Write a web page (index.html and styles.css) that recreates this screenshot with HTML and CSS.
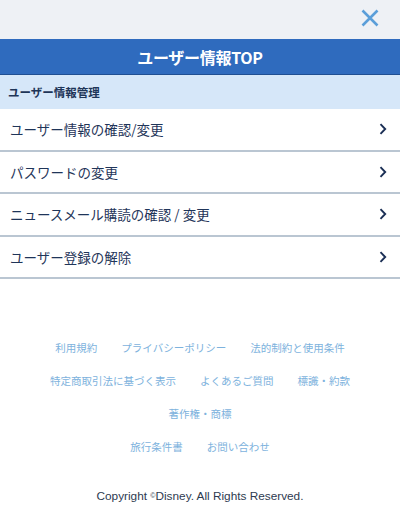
FILE: index.html
```html
<!DOCTYPE html>
<html lang="ja">
<head>
<meta charset="utf-8">
<title>ユーザー情報TOP</title>
<link rel="stylesheet" href="styles.css">
</head>
<body>
<div class="topbar">
  <svg class="close" width="18" height="18" viewBox="0 0 18 18"><path d="M1.5 1.5 L16.5 16.5 M16.5 1.5 L1.5 16.5" stroke="#5b9fd9" stroke-width="2.6" fill="none"/></svg>
</div>
<h1 class="title">ユーザー情報TOP</h1>
<div class="subhead">ユーザー情報管理</div>
<ul class="menu">
  <li class="row"><span>ユーザー情報の確認/変更</span><svg class="chev" width="8" height="12" viewBox="0 0 8 12"><path d="M1.5 1.2 L6.2 6 L1.5 10.8" stroke="#1b2f55" stroke-width="1.9" fill="none"/></svg></li>
  <li class="row"><span>パスワードの変更</span><svg class="chev" width="8" height="12" viewBox="0 0 8 12"><path d="M1.5 1.2 L6.2 6 L1.5 10.8" stroke="#1b2f55" stroke-width="1.9" fill="none"/></svg></li>
  <li class="row"><span>ニュースメール購読の確認 / 変更</span><svg class="chev" width="8" height="12" viewBox="0 0 8 12"><path d="M1.5 1.2 L6.2 6 L1.5 10.8" stroke="#1b2f55" stroke-width="1.9" fill="none"/></svg></li>
  <li class="row"><span>ユーザー登録の解除</span><svg class="chev" width="8" height="12" viewBox="0 0 8 12"><path d="M1.5 1.2 L6.2 6 L1.5 10.8" stroke="#1b2f55" stroke-width="1.9" fill="none"/></svg></li>
</ul>
<footer class="footer">
  <div class="links">
    <a>利用規約</a><a>プライバシーポリシー</a><a>法的制約と使用条件</a>
  </div>
  <div class="links">
    <a>特定商取引法に基づく表示</a><a>よくあるご質問</a><a>標識・約款</a>
  </div>
  <div class="links">
    <a>著作権・商標</a>
  </div>
  <div class="links">
    <a>旅行条件書</a><a>お問い合わせ</a>
  </div>
  <p class="copy">Copyright <span class="c">©</span>Disney. All Rights Reserved.</p>
</footer>
</body>
</html>
```
FILE: styles.css
```css
* { box-sizing: border-box; }
body {
  margin: 0;
  width: 400px;
  background: #fff;
  font-family: "Noto Sans CJK JP", "Noto Sans", sans-serif;
  color: #1f3559;
}
.topbar {
  height: 39px;
  background: #eef1f5;
  display: flex;
  justify-content: flex-end;
  align-items: center;
  padding-right: 21px;
  padding-bottom: 4px;
}
.close { display: block; }
.title {
  margin: 0;
  height: 36px;
  background: #2f6bbe;
  border-bottom: 1px solid #1f4f92;
  color: #fff;
  font-size: 16px;
  font-weight: 700;
  display: flex;
  align-items: center;
  justify-content: center;
  letter-spacing: -0.3px;
}
.subhead {
  height: 34px;
  background: #d6e7f9;
  font-size: 11.5px;
  font-weight: 700;
  color: #1e3558;
  display: flex;
  align-items: center;
  padding-left: 8px;
}
.menu {
  list-style: none;
  margin: 0;
  padding: 0;
}
.row {
  height: 42.6px;
  border-bottom: 2px solid #bac6d2;
  display: flex;
  align-items: center;
  justify-content: space-between;
  padding: 0 13px 0 10px;
  font-size: 13.5px;
  color: #1f3559;
}
.chev { display: block; }
.footer {
  padding-top: 52px;
  text-align: center;
}
.links {
  height: 33px;
  display: flex;
  justify-content: center;
  align-items: center;
  gap: 24px;
  font-size: 10.5px;
  color: #7db2dd;
}
.copy {
  margin: 26px 0 0;
  font-family: "Liberation Sans", Arial, sans-serif;
  font-size: 11.8px;
  color: #2e3a50;
}
.copy .c { font-size: 7px; vertical-align: 2px; }
```
